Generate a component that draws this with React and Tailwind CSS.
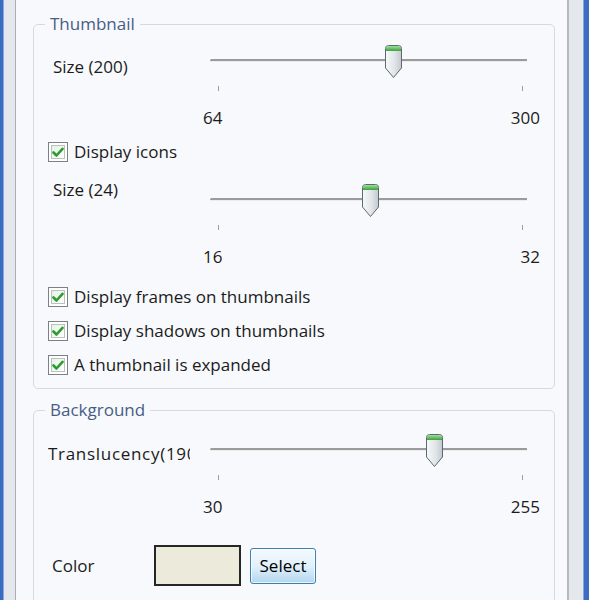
import React from 'react';

// Trackbar thumb: grey body with a green cap, pointing down at the ticks
const Thumb = () => (
  <svg width="19" height="34" viewBox="0 0 19 34">
    <defs>
      <linearGradient id="thumbBody" x1="0" x2="1" y1="0" y2="0">
        <stop offset="0" stopColor="#f7f8f9" />
        <stop offset="0.55" stopColor="#e2e6e9" />
        <stop offset="1" stopColor="#c2c9ce" />
      </linearGradient>
      <linearGradient id="thumbCap" x1="0" x2="0" y1="0" y2="1">
        <stop offset="0" stopColor="#9be29b" />
        <stop offset="1" stopColor="#3d9f3d" />
      </linearGradient>
    </defs>
    <path
      d="M1.5 3.5 Q1.5 0.5 4.5 0.5 H14.5 Q17.5 0.5 17.5 3.5 V23 L9.5 32.5 L1.5 23 Z"
      fill="url(#thumbBody)"
      stroke="#5d6970"
    />
    <path d="M2 3.5 Q2 1 4.5 1 H14.5 Q17 1 17 3.5 V6 H2 Z" fill="url(#thumbCap)" />
  </svg>
);

const Slider = ({ min, max, value }) => {
  const frac = (value - min) / (max - min);
  return (
    <div className="w-[345px]">
      <div className="relative h-[46px]">
        <div className="absolute left-[10px] top-[14px] w-[317px] h-[3px] border-t-2 border-[#9b9b9b] bg-[#ececec] rounded-l-sm" />
        <div className="absolute left-[18px] top-[41px] w-px h-[5px] bg-[#9c9c9c]" />
        <div className="absolute left-[322px] top-[41px] w-px h-[5px] bg-[#9c9c9c]" />
        <div className="absolute top-0" style={{ left: 18 + frac * 304 - 9.5 }}>
          <Thumb />
        </div>
      </div>
      <div className="flex justify-between pl-[3px] pr-[5px] mt-[17px] leading-5">
        <span>{min}</span>
        <span>{max}</span>
      </div>
    </div>
  );
};

const Check = ({ label, className = '' }) => (
  <div className={`flex items-center h-5 pl-[14px] ${className}`}>
    <div className="w-5 h-5 border border-[#7c8187] p-[2px] bg-white">
      <div className="w-full h-full border border-[#b9c3b9] bg-linear-to-br from-[#e4f3e4] to-white flex items-center justify-center">
        <svg width="12" height="11" viewBox="0 0 12 11">
          <path d="M1.5 5.5 L4.5 8.5 L10.5 1.8" fill="none" stroke="#2f9a35" strokeWidth="2.6" strokeLinecap="round" strokeLinejoin="round" />
        </svg>
      </div>
    </div>
    <span className="ml-[6px] whitespace-nowrap">{label}</span>
  </div>
);

const Group = ({ title, className = '', children }) => (
  <fieldset className={`ml-[17px] mr-[12px] border border-[#d3dae1] rounded-[5px] ${className}`}>
    <legend className="ml-[11px] px-[5px] leading-5 text-[#475d86]">{title}</legend>
    {children}
  </fieldset>
);

export default function App() {
  return (
    <div className="flex h-[600px] w-[589px] overflow-hidden font-['Open_Sans','Noto_Sans',sans-serif] text-[17px] text-[#1b1b1b]">
      {/* window frame, left */}
      <div className="w-[4px] bg-[#3c6cc2] border-r border-[#86a6dd]" />
      <div className="w-[11px] bg-[#e4e8ed]" />
      <div className="w-px bg-[#a9aeb4]" />

      <div className="flex-1 bg-[#f7f9fc]">
        <Group title="Thumbnail" className="mt-[14px] pb-[13px]">
          <div className="flex items-start mt-[11px]">
            <div className="w-[166px] pl-[19px] mt-3 leading-5">Size (200)</div>
            <Slider min={64} max={300} value={200} />
          </div>

          <Check label="Display icons" className="mt-[14px]" />

          <div className="flex items-start mt-[22px]">
            <div className="w-[166px] pl-[19px] -mt-1 leading-5">Size (24)</div>
            <Slider min={16} max={32} value={24} />
          </div>

          <Check label="Display frames on thumbnails" className="mt-[20px]" />
          <Check label="Display shadows on thumbnails" className="mt-[14px]" />
          <Check label="A thumbnail is expanded" className="mt-[14px]" />
        </Group>

        <Group title="Background" className="mt-[11px] pb-6">
          <div className="flex items-start mt-[14px]">
            <div className="w-[166px] pl-[14px] mt-[10px] leading-5">
              <div className="w-[142px] overflow-hidden whitespace-nowrap tracking-[0.7px]">Translucency(190)</div>
            </div>
            <Slider min={30} max={255} value={190} />
          </div>

          <div className="flex items-center mt-[28px] h-[41px]">
            <div className="w-[120px] pl-[18px] leading-5">Color</div>
            <div className="w-[87px] h-[41px] border-2 border-[#262626] bg-[#ecebdb]" />
            <button className="ml-[9px] w-[66px] h-[36px] rounded-[3px] border border-[#3c7fb1] bg-linear-to-b from-[#f4fafe] via-[#e2f1fb] to-[#b3d6ee] shadow-[inset_0_0_0_1px_rgba(255,255,255,0.7)] leading-5 text-black">
              Select
            </button>
          </div>
        </Group>
      </div>

      {/* window frame, right */}
      <div className="w-[2px] bg-[#b5b9be]" />
      <div className="w-[14px] bg-[#e4e8ed]" />
      <div className="w-[6px] bg-[#3c6cc2] border-l border-[#86a6dd]" />
    </div>
  );
}
